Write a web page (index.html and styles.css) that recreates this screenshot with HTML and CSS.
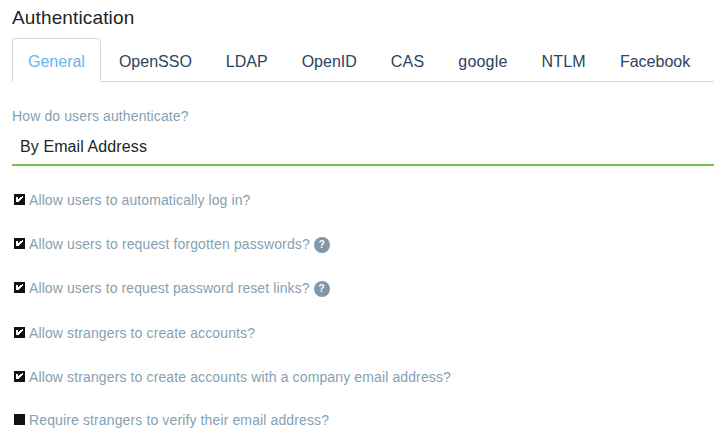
FILE: index.html
```html
<!DOCTYPE html>
<html lang="en">
<head>
<meta charset="utf-8">
<title>Authentication</title>
<link rel="stylesheet" href="styles.css">
</head>
<body>
<main class="settings">
  <h1 class="title">Authentication</h1>
  <nav class="tabs">
    <a class="tab active">General</a>
    <a class="tab">OpenSSO</a>
    <a class="tab">LDAP</a>
    <a class="tab">OpenID</a>
    <a class="tab wide">CAS</a>
    <a class="tab wide">google</a>
    <a class="tab wide">NTLM</a>
    <a class="tab">Facebook</a>
  </nav>
  <div class="label">How do users authenticate?</div>
  <div class="select">By Email Address</div>
  <div class="options">
    <div class="option snug"><svg class="box" viewBox="0 0 11 11"><path class="fill" d="M0 0h11v11H0z"/><path class="tick" d="M2 3h2v2h1v-1h1v-1h2v-1h1v2h-1v1h-1v1h-1v1h-1v1h-3z"/></svg><span>Allow users to automatically log in?</span></div>
    <div class="option"><svg class="box" viewBox="0 0 11 11"><path class="fill" d="M0 0h11v11H0z"/><path class="tick" d="M2 3h2v2h1v-1h1v-1h2v-1h1v2h-1v1h-1v1h-1v1h-1v1h-3z"/></svg><span>Allow users to request forgotten passwords?</span><i class="help">?</i></div>
    <div class="option snug"><svg class="box" viewBox="0 0 11 11"><path class="fill" d="M0 0h11v11H0z"/><path class="tick" d="M2 3h2v2h1v-1h1v-1h2v-1h1v2h-1v1h-1v1h-1v1h-1v1h-3z"/></svg><span>Allow users to request password reset links?</span><i class="help">?</i></div>
    <div class="option"><svg class="box" viewBox="0 0 11 11"><path class="fill" d="M0 0h11v11H0z"/><path class="tick" d="M2 3h2v2h1v-1h1v-1h2v-1h1v2h-1v1h-1v1h-1v1h-1v1h-3z"/></svg><span>Allow strangers to create accounts?</span></div>
    <div class="option"><svg class="box" viewBox="0 0 11 11"><path class="fill" d="M0 0h11v11H0z"/><path class="tick" d="M2 3h2v2h1v-1h1v-1h2v-1h1v2h-1v1h-1v1h-1v1h-1v1h-3z"/></svg><span>Allow strangers to create accounts with a company email address?</span></div>
    <div class="option last"><svg class="box" viewBox="0 0 11 11"><path class="fill" d="M0 0h11v11H0z"/></svg><span>Require strangers to verify their email address?</span></div>
  </div>
</main>
</body>
</html>
```
FILE: styles.css
```css
* { box-sizing: border-box; }
html, body { height: 100%; overflow: hidden; }
body { margin: 0; background: #fff; font-family: "Liberation Sans", Arial, sans-serif; color: #212529; }
.settings { padding: 6px 8px 0 12px; }
.title { margin: 0; font-size: 19px; line-height: 24px; font-weight: 400; letter-spacing: 0.14px; }
.tabs { display: flex; height: 44px; margin-top: 8px; border-bottom: 1px solid #d6d8da; }
.tab { height: 44px; padding: 0 15px; border: 1px solid transparent; font-size: 16px; line-height: 46px; color: #2b4460; margin-right: 2px; }
.tab.wide { letter-spacing: 0.2px; }
.tab.active { background: #fff; border-color: #d6d8da #d6d8da #fff; border-radius: 4px 4px 0 0; color: #66b5f0; }
.label { margin-top: 25px; font-size: 14px; line-height: 18px; letter-spacing: 0.12px; color: #869fb2; }
.select { height: 41px; padding: 0 8px; border-bottom: 2px solid #76c04e; font-size: 16px; line-height: 44px; letter-spacing: 0.1px; }
.options { margin-top: 12px; color: #869fb2; }
.option { display: flex; align-items: center; height: 44.2px; padding-left: 2px; font-size: 14px; letter-spacing: 0.125px; }
.option.snug { letter-spacing: 0.1px; }
.option.last { height: 42.2px; }
.box { width: 11px; height: 11px; margin: 0 4px 1px 0; flex: none; shape-rendering: crispEdges; }
.fill { fill: #111; }
.tick { fill: #fff; }
.help { width: 16px; height: 16px; margin: 1px 0 0 4px; border-radius: 50%; background: #8298a9; color: #fff; font: bold 10px/16px "Liberation Sans", sans-serif; text-align: center; }
```
